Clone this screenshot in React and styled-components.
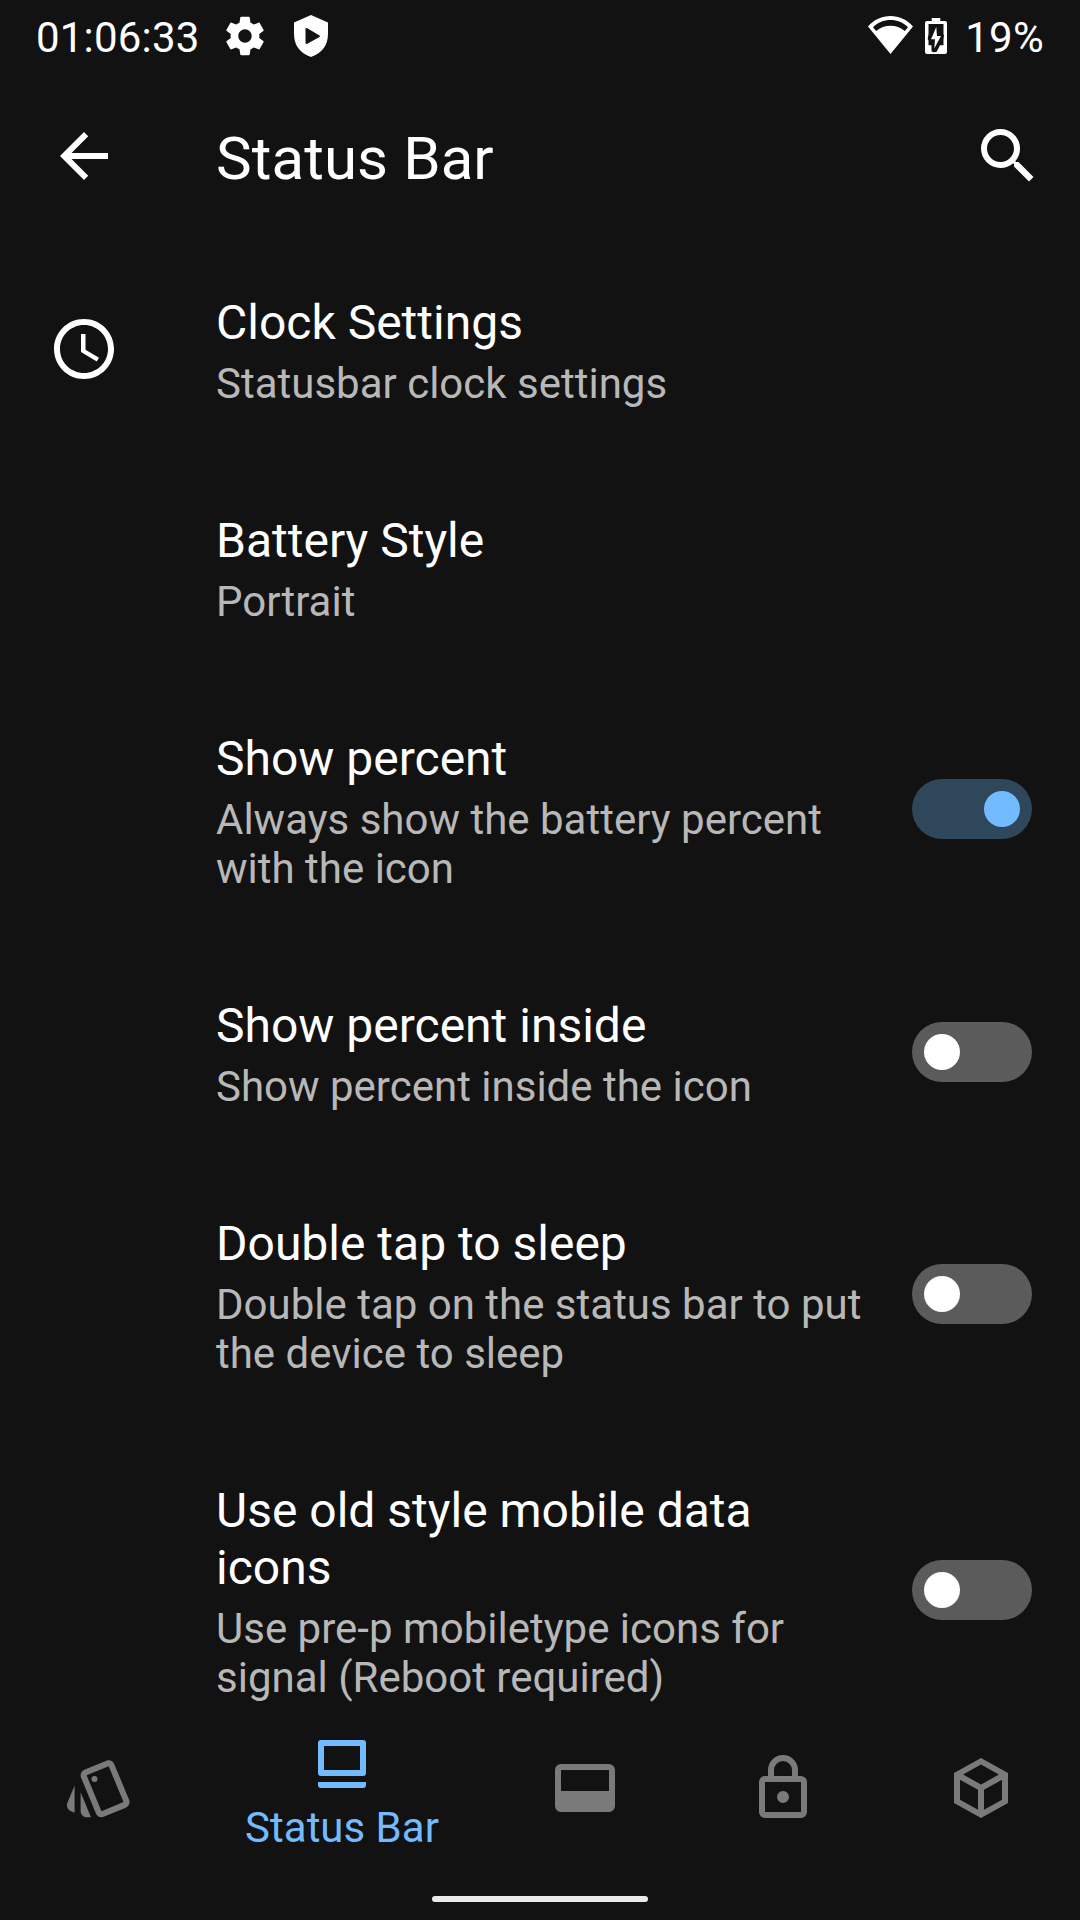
import React from 'react';
import styled, { createGlobalStyle } from 'styled-components';

const colors = {
  background: '#121212',
  accent: '#73bbff',
  text: '#ffffff',
  secondary: '#b8b8b8',
  inactive: '#7a7a7a',
};

const GlobalStyle = createGlobalStyle`
  * {
    box-sizing: border-box;
  }

  body {
    margin: 0;
    background: ${colors.background};
    color: ${colors.text};
    font-family: Roboto, sans-serif;
  }
`;

const Screen = styled.div`
  display: flex;
  flex-direction: column;
  width: 1080px;
  height: 1920px;
  overflow: hidden;
  background: ${colors.background};
`;

const SystemBar = styled.div`
  display: flex;
  flex: none;
  align-items: center;
  justify-content: space-between;
  height: 72px;
  padding: 3px 36px 0;
  font-size: 42px;
  line-height: 49px;
`;

const SystemGroup = styled.div`
  display: flex;
  align-items: center;
`;

const Clock = styled.span`
  margin-right: 22px;
  letter-spacing: 0.2px;
`;

const Percent = styled.span`
  margin-left: 10px;
  letter-spacing: 0.3px;
`;

const Icon = styled.svg`
  display: block;
  flex: none;
  width: ${props => props.$width || props.$size || 72}px;
  height: ${props => props.$size || 72}px;
  margin: ${props => props.$margin || 0};
  fill: currentColor;
`;

const AppBar = styled.header`
  display: flex;
  flex: none;
  align-items: center;
  height: 168px;
  padding: 0 36px 0 48px;
  border-bottom: 1px solid #101010;
`;

const AppTitle = styled.h1`
  flex: 1;
  margin: 6px 0 0 96px;
  font-size: 60px;
  font-weight: 400;
  line-height: 70px;
  letter-spacing: 0.1px;
`;

const List = styled.main`
  flex: 1;
  min-height: 0;
  overflow: hidden;
`;

const Row = styled.div`
  display: flex;
  align-items: center;
  padding: 0 48px 0 0;
`;

const IconSlot = styled.div`
  flex: none;
  width: 216px;
  padding-left: 48px;
`;

const RowText = styled.div`
  flex: 1;
  padding: 54px 48px 50px 0;
`;

const RowTitle = styled.div`
  font-size: 48px;
  line-height: 57px;
`;

const RowSummary = styled.div`
  margin-top: 8px;
  color: ${colors.secondary};
  font-size: 42px;
  line-height: 49px;
`;

const Track = styled.div`
  display: flex;
  flex: none;
  justify-content: ${props => (props.$on ? 'flex-end' : 'flex-start')};
  width: 120px;
  height: 60px;
  margin-bottom: 1px;
  padding: 12px;
  border-radius: 30px;
  background: ${props => (props.$on ? '#2f475b' : '#5b5b5b')};
`;

const Thumb = styled.div`
  width: 36px;
  height: 36px;
  border-radius: 50%;
  background: ${props => (props.$on ? colors.accent : colors.text)};
`;

const BottomNav = styled.nav`
  display: grid;
  flex: none;
  grid-template-columns: 198px 288px 198px 198px 198px;
  height: 168px;
`;

const NavItem = styled.div`
  display: flex;
  flex-direction: column;
  align-items: center;
  justify-content: center;
  padding-top: ${props => (props.$active ? 4 : 0)}px;
  color: ${props => (props.$active ? colors.accent : colors.inactive)};
`;

const NavLabel = styled.span`
  margin-top: 3px;
  font-size: 42px;
  line-height: 49px;
`;

const GestureArea = styled.div`
  display: flex;
  flex: none;
  justify-content: center;
  height: 48px;
  padding-top: 24px;
`;

const GesturePill = styled.div`
  width: 216px;
  height: 6px;
  border-radius: 3px;
  background: #ebebeb;
`;

const Switch = ({ on }) => (
  <Track $on={on}>
    <Thumb $on={on} />
  </Track>
);

const ClockIcon = () => (
  <Icon viewBox="0 0 24 24">
    <path d="M11.99 2C6.47 2 2 6.48 2 12s4.47 10 9.99 10C17.52 22 22 17.52 22 12S17.52 2 11.99 2zM12 20c-4.42 0-8-3.58-8-8s3.58-8 8-8 8 3.58 8 8-3.58 8-8 8zm.5-13H11v6l5.25 3.15.75-1.23-4.5-2.67z" />
  </Icon>
);

const settings = [
  { title: 'Clock Settings', summary: 'Statusbar clock settings', icon: <ClockIcon /> },
  { title: 'Battery Style', summary: 'Portrait' },
  { title: 'Show percent', summary: 'Always show the battery percent with the icon', on: true },
  { title: 'Show percent inside', summary: 'Show percent inside the icon', on: false },
  { title: 'Double tap to sleep', summary: 'Double tap on the status bar to put the device to sleep', on: false },
  { title: 'Use old style mobile data icons', summary: 'Use pre-p mobiletype icons for signal (Reboot required)', on: false },
];

const tabs = [
  {
    id: 'themes',
    icon: (
      <>
        <path d="M2.53 19.65l1.34.56v-9.03l-2.43 5.86c-.41 1.02.08 2.19 1.09 2.61zm19.5-3.7L17.07 3.98c-.31-.75-1.04-1.21-1.81-1.23-.26 0-.53.04-.79.15L7.1 5.95c-.75.31-1.21 1.03-1.23 1.8-.01.27.04.54.15.8l4.96 11.97c.31.76 1.05 1.22 1.83 1.23.26 0 .52-.05.77-.15l7.36-3.05c1.02-.42 1.51-1.59 1.09-2.6zm-9.2 3.8L7.87 7.79l7.35-3.04h.01l4.95 11.95-7.35 3.05z" />
        <circle cx="10.5" cy="9" r="1" />
        <path d="M5.88 19.75c0 1.1.9 2 2 2h1.45l-3.45-8.34v6.34z" />
      </>
    ),
  },
  {
    id: 'status-bar',
    label: 'Status Bar',
    icon: <path fillRule="evenodd" d="M5 4h14a1 1 0 0 1 1 1v10a1 1 0 0 1-1 1H5a1 1 0 0 1-1-1V5a1 1 0 0 1 1-1zm1 2v8h12V6zM4 18h16v1a1 1 0 0 1-1 1H5a1 1 0 0 1-1-1z" />,
  },
  {
    id: 'navigation',
    icon: <path fillRule="evenodd" d="M4 4h16a2 2 0 0 1 2 2v12a2 2 0 0 1-2 2H4a2 2 0 0 1-2-2V6a2 2 0 0 1 2-2zm0 2v7h16V6z" />,
  },
  {
    id: 'lock-screen',
    icon: <path fillRule="evenodd" d="M12 17a2 2 0 1 1 0-4 2 2 0 0 1 0 4m6 3V10H6v10zm0-12a2 2 0 0 1 2 2v10a2 2 0 0 1-2 2H6a2 2 0 0 1-2-2V10a2 2 0 0 1 2-2h1V6a5 5 0 0 1 10 0v2zm-6-5a3 3 0 0 0-3 3v2h6V6a3 3 0 0 0-3-3z" />,
  },
  {
    id: 'misc',
    icon: <path fillRule="evenodd" d="M12 2l9 5v10l-9 5-9-5V7zM12 4.15L6.04 7.5 12 10.85l5.96-3.35zM5 15.91l6 3.38v-6.71L5 9.21zm14 0v-6.7l-6 3.37v6.71z" />,
  },
];

const App = () => (
  <Screen>
    <GlobalStyle />
    <SystemBar>
      <SystemGroup>
        <Clock>01:06:33</Clock>
        <Icon viewBox="0 0 24 24" $size={46} $margin="0 26px 3px 0">
          <path d="M19.43 12.98c.04-.32.07-.64.07-.98s-.03-.66-.07-.98l2.11-1.65c.19-.15.24-.42.12-.64l-2-3.46c-.12-.22-.39-.3-.61-.22l-2.49 1c-.52-.4-1.08-.73-1.69-.98l-.38-2.65A.488.488 0 0 0 14 2h-4c-.25 0-.46.18-.49.42l-.38 2.65c-.61.25-1.17.59-1.69.98l-2.49-1c-.23-.09-.49 0-.61.22l-2 3.46c-.13.22-.07.49.12.64l2.11 1.65c-.04.32-.07.65-.07.98s.03.66.07.98l-2.11 1.65c-.19.15-.24.42-.12.64l2 3.46c.12.22.39.3.61.22l2.49-1c.52.4 1.08.73 1.69.98l.38 2.65c.03.24.24.42.49.42h4c.25 0 .46-.18.49-.42l.38-2.65c.61-.25 1.17-.59 1.69-.98l2.49 1c.23.09.49 0 .61-.22l2-3.46c.12-.22.07-.49-.12-.64zM12 15.5c-1.93 0-3.5-1.57-3.5-3.5s1.57-3.5 3.5-3.5 3.5 1.57 3.5 3.5-1.57 3.5-3.5 3.5z" />
        </Icon>
        <Icon viewBox="0 0 34 42" $width={34} $size={42} $margin="0 0 3px">
          <path fillRule="evenodd" d="M17 0l17 7.500v11C34 30 28.500 38 17 42 5.500 38 0 30 0 18.500v-11zM11.500 14v13.500q0 2 1.800 1.200L25.500 22q1-.8 0-1.600L13.300 13.200q-1.800-.8-1.800.8z" />
        </Icon>
      </SystemGroup>
      <SystemGroup>
        <Icon viewBox="0 0 45 38" $width={45} $size={38} $margin="0 0 5px">
          <path fillRule="evenodd" d="M22.500 0C14 0 6 3.500 0 10.500L22.500 38 45 10.500C39 3.500 31 0 22.500 0zm0 4c6.500 0 12.500 2.500 17.500 7.200L36.800 15c-4-3.600-9-5.300-14.300-5.300S12.200 11.400 8.200 15L5 11.200C10 6.500 16 4 22.500 4z" />
        </Icon>
        <Icon viewBox="0 0 22 36" $width={22} $size={36} $margin="0 8px 3px 12px">
          <path fillRule="evenodd" d="M6.700 0h8.600v3H20a2 2 0 0 1 2 2v29a2 2 0 0 1-2 2H2a2 2 0 0 1-2-2V5a2 2 0 0 1 2-2h4.700zM3.500 6v10l-.8 5 .8 1.500v4.800h3V33l1.500 1.300 3.500-.3 3.500-6.700h3.500V21l.5-3.500-.5-1.500V6zm7.800 3L6 21.300h4l-.7 9.200L16 18h-4z" />
        </Icon>
        <Percent>19%</Percent>
      </SystemGroup>
    </SystemBar>
    <AppBar>
      <Icon viewBox="0 0 24 24">
        <path d="M20 11H7.830l5.590-5.590L12 4l-8 8 8 8 1.410-1.410L7.830 13H20v-2z" />
      </Icon>
      <AppTitle>Status Bar</AppTitle>
      <Icon viewBox="0 0 24 24">
        <path d="M15.500 14h-.79l-.28-.27A6.471 6.471 0 0 0 16 9.500 6.500 6.500 0 1 0 9.500 16c1.610 0 3.090-.59 4.230-1.570l.27.28v.79l5 4.990L20.490 19l-4.990-5zm-6 0C7.010 14 5 11.990 5 9.500S7.010 5 9.500 5 14 7.010 14 9.500 11.990 14 9.500 14z" />
      </Icon>
    </AppBar>
    <List>
      {settings.map(({ title, summary, icon, on }) => (
        <Row key={title}>
          <IconSlot>{icon}</IconSlot>
          <RowText>
            <RowTitle>{title}</RowTitle>
            <RowSummary>{summary}</RowSummary>
          </RowText>
          {on !== undefined && <Switch on={on} />}
        </Row>
      ))}
    </List>
    <BottomNav>
      {tabs.map(({ id, label, icon }) => (
        <NavItem key={id} $active={Boolean(label)}>
          <Icon viewBox="0 0 24 24">{icon}</Icon>
          {label && <NavLabel>{label}</NavLabel>}
        </NavItem>
      ))}
    </BottomNav>
    <GestureArea>
      <GesturePill />
    </GestureArea>
  </Screen>
);

export default App;
